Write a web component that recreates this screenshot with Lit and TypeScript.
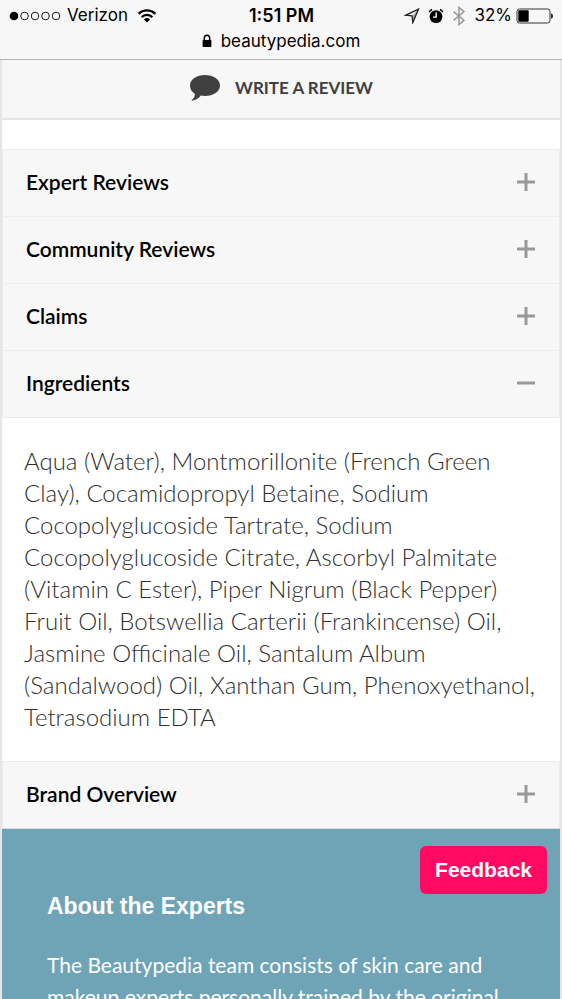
import { LitElement, html, css, svg } from "lit";
import { customElement, property, state } from "lit/decorators.js";

@customElement("status-bar")
export class StatusBar extends LitElement {
  static styles = css`
    :host {
      display: block;
      flex: none;
      background: #f7f7f7;
      border-bottom: 1px solid #b4b4b4;
      color: #000;
      font-family: Inter, "Liberation Sans", sans-serif;
    }
    .row {
      display: grid;
      grid-template-columns: 1fr auto 1fr;
      align-items: center;
      height: 31px;
      padding: 0 8px 0 9px;
      font-size: 17px;
      line-height: 31px;
    }
    .left,
    .right,
    .address {
      display: flex;
      align-items: center;
    }
    .left {
      gap: 6px;
    }
    .wifi {
      margin-left: 3px;
    }
    .right {
      justify-content: flex-end;
      gap: 4px;
    }
    .time {
      font-size: 18px;
      font-weight: 600;
    }
    .arrow {
      margin-right: 4px;
    }
    .bluetooth {
      margin: 0 4px;
    }
    .address {
      justify-content: center;
      gap: 9px;
      height: 28px;
      line-height: 20px;
      font-size: 17px;
      align-items: flex-start;
    }
    .lock {
      margin-top: 3px;
    }
    svg {
      display: block;
      flex: none;
    }
  `;

  render() {
    return html`
      <div class="row">
        <div class="left">
          <svg width="52" height="12" viewBox="0 0 52 12" aria-hidden="true">
            <circle cx="5" cy="6" r="4.3" />
            ${[15.5, 26, 36.5, 47].map(
              (x) => svg`<circle cx=${x} cy="6" r="3.8" fill="none" stroke="#000" stroke-width="0.9" />`
            )}
          </svg>
          <span>Verizon</span>
          <svg class="wifi" width="20" height="14" viewBox="0 0 20 14" aria-hidden="true">
            <path d="M1.6 4.9 A12 12 0 0 1 18.4 4.9" fill="none" stroke="#000" stroke-width="2.3" />
            <path d="M4.6 8.1 A7.7 7.7 0 0 1 15.4 8.1" fill="none" stroke="#000" stroke-width="2.2" />
            <path d="M10 13.6 L6.9 10.4 A4.4 4.4 0 0 1 13.1 10.4 Z" />
          </svg>
        </div>
        <span class="time">1:51 PM</span>
        <div class="right">
          <svg class="arrow" width="16" height="16" viewBox="0 0 16 16" aria-hidden="true">
            <path d="M14.5 1.2 L1.5 7.3 L8.1 7.9 L8.8 14.6 Z" fill="none" stroke="#222" stroke-width="1.3" />
            <path d="M14.5 1.2 L8.1 7.9 L8.8 14.6 Z" fill="#222" fill-opacity="0.35" />
          </svg>
          <svg width="16" height="16" viewBox="0 0 16 16" aria-hidden="true">
            <circle cx="8" cy="8.6" r="6.4" />
            <path d="M8.2 4.6 V9.1 H5" fill="none" stroke="#fff" stroke-width="1.4" />
            <path d="M1.1 4.2 A8.6 8.6 0 0 1 4 1.4 M12 1.4 A8.6 8.6 0 0 1 14.9 4.2" fill="none" stroke="#000" stroke-width="1.4" />
          </svg>
          <svg class="bluetooth" width="14" height="20" viewBox="0 0 14 20" aria-hidden="true">
            <path d="M1.6 5.6 L12 14.4 L7 18.6 V1.4 L12 5.6 L1.6 14.4" fill="none" stroke="#999" stroke-width="1.5" />
          </svg>
          <span>32%</span>
          <svg width="38" height="16" viewBox="0 0 38 16" aria-hidden="true">
            <rect x="1" y="1" width="33" height="14" rx="2.5" fill="none" stroke="#333" stroke-width="1" />
            <rect x="2.3" y="2.3" width="10.4" height="11.4" rx="1" />
            <path d="M35.2 5.4 C37.4 5.6 37.4 10.4 35.2 10.6 Z" />
          </svg>
        </div>
      </div>
      <div class="address">
        <svg class="lock" width="10" height="14" viewBox="0 0 10 14" aria-hidden="true">
          <path d="M2.3 6.5 V4.2 A2.7 2.9 0 0 1 7.7 4.2 V6.5" fill="none" stroke="#000" stroke-width="1.5" />
          <rect x="0.6" y="6" width="8.8" height="7" rx="0.8" />
        </svg>
        <span>beautypedia.com</span>
      </div>
    `;
  }
}

@customElement("accordion-row")
export class AccordionRow extends LitElement {
  @property() label = "";
  @property({ type: Boolean, reflect: true }) open = false;

  static styles = css`
    :host {
      display: block;
    }
    .head {
      display: flex;
      align-items: center;
      justify-content: space-between;
      box-sizing: border-box;
      width: 100%;
      height: 67px;
      margin: 0;
      padding: 0 23px 3px;
      border: 0 solid #ececec;
      border-width: 1px 1px 0;
      background: #f7f7f7;
      color: #000;
      font: 600 21px/24px Lato, "Liberation Sans", sans-serif;
      text-align: left;
      cursor: pointer;
    }
    .body {
      border-top: 1px solid #ececec;
    }
    svg {
      flex: none;
    }
  `;

  private toggle() {
    this.open = !this.open;
  }

  render() {
    return html`
      <button class="head" type="button" aria-expanded=${this.open} @click=${this.toggle}>
        <span>${this.label}</span>
        <svg width="20" height="20" viewBox="0 0 20 20" aria-hidden="true">
          <path d=${this.open ? "M1 10 H19" : "M1 10 H19 M10 1 V19"} fill="none" stroke="#999" stroke-width="3" />
        </svg>
      </button>
      ${this.open ? html`<div class="body"><slot></slot></div>` : ""}
    `;
  }
}

@customElement("app-root")
export class AppRoot extends LitElement {
  @state() private ingredients = [
    "Aqua (Water), Montmorillonite (French Green",
    "Clay), Cocamidopropyl Betaine, Sodium",
    "Cocopolyglucoside Tartrate, Sodium",
    "Cocopolyglucoside Citrate, Ascorbyl Palmitate",
    "(Vitamin C Ester), Piper Nigrum (Black Pepper)",
    "Fruit Oil, Botswellia Carterii (Frankincense) Oil,",
    "Jasmine Officinale Oil, Santalum Album",
    "(Sandalwood) Oil, Xanthan Gum, Phenoxyethanol,",
    "Tetrasodium EDTA",
  ];

  static styles = css`
    :host {
      position: relative;
      display: flex;
      flex-direction: column;
      height: 100vh;
      overflow: hidden;
      background: #fff;
      font-family: Lato, "Liberation Sans", sans-serif;
    }
    .page {
      flex: 1;
      min-height: 0;
      overflow-y: auto;
      scrollbar-width: none;
      border: 0 solid #e6e6e6;
      border-width: 0 2px;
    }
    .review {
      display: flex;
      align-items: center;
      justify-content: center;
      gap: 14px;
      box-sizing: border-box;
      width: 100%;
      height: 60px;
      margin: 0 0 29px;
      padding: 0 0 3px;
      border: 0 solid #e6e6e6;
      border-bottom-width: 2px;
      background: #f7f7f7;
      color: #404040;
      font: 700 17px/24px Lato, "Liberation Sans", sans-serif;
      cursor: pointer;
    }
    .ingredients {
      margin: 0;
      padding: 27px 22px 28px;
      color: #303030;
      font-size: 24px;
      font-weight: 300;
      line-height: 32px;
      white-space: nowrap;
    }
    .experts {
      padding: 61px 45px;
      border-top: 1px solid #d8dcde;
      background: #6fa4b7;
      color: #fff;
    }
    .experts h2 {
      margin: 0 0 27px;
      font: 700 23px/32px "Liberation Sans", sans-serif;
    }
    .experts p {
      margin: 0;
      font-size: 21px;
      line-height: 32px;
      white-space: nowrap;
    }
    .feedback {
      position: absolute;
      right: 15px;
      bottom: 105px;
      height: 48px;
      padding: 0 15px;
      border: 0;
      border-radius: 6px;
      background: #ff0a62;
      color: #fff;
      font: 700 21px/24px "Liberation Sans", sans-serif;
      cursor: pointer;
    }
  `;

  render() {
    return html`
      <status-bar></status-bar>
      <main class="page">
        <button class="review" type="button">
          <svg width="32" height="28" viewBox="0 0 32 28" aria-hidden="true">
            <path
              d="M16 1 C24.3 1 31 5.4 31 11.5 C31 17.6 24.3 22 16 22 C14.6 22 13.2 21.9 11.9 21.6 C9.6 24.4 6.7 26.4 3.2 26.8 C2.6 26.8 2.6 26.2 3 25.8 C4.6 24.3 5.8 22.8 6 20 C2.9 18 1 15.3 1 11.5 C1 5.4 7.7 1 16 1 Z"
              fill="#404040"
            />
          </svg>
          <span>WRITE A REVIEW</span>
        </button>
        <accordion-row label="Expert Reviews"></accordion-row>
        <accordion-row label="Community Reviews"></accordion-row>
        <accordion-row label="Claims"></accordion-row>
        <accordion-row label="Ingredients" open>
          <p class="ingredients">${this.ingredients.map((line, i) => (i ? html`<br />${line}` : line))}</p>
        </accordion-row>
        <accordion-row label="Brand Overview"></accordion-row>
        <section class="experts">
          <h2>About the Experts</h2>
          <p>
            The Beautypedia team consists of skin care and<br />makeup experts personally trained by the original
          </p>
        </section>
      </main>
      <button class="feedback" type="button">Feedback</button>
    `;
  }
}
